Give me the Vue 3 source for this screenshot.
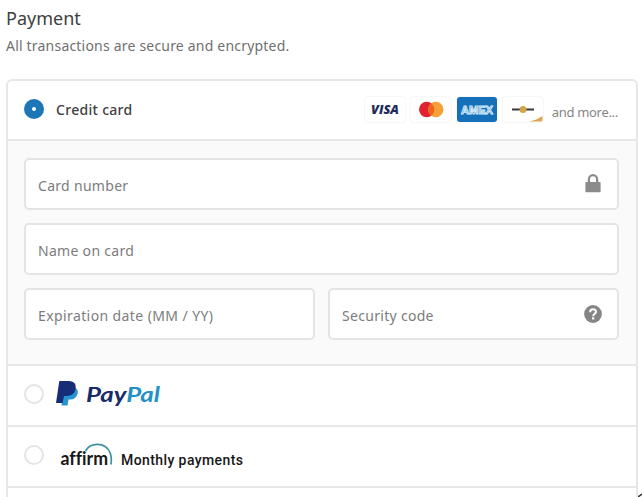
<template>
  <main class="payment">
    <h2 class="title">Payment</h2>
    <p class="subtitle">All transactions are secure and encrypted.</p>

    <section class="methods">
      <div class="method card-method" @click="selected = 'card'">
        <span :class="['radio', { checked: selected == 'card' }]"></span>
        <span class="method-name">Credit card</span>
        <div class="brands">
          <svg class="brand" viewBox="0 0 40 25">
            <text x="6" y="16.5" class="visa" textLength="28" lengthAdjust="spacingAndGlyphs">VISA</text>
          </svg>
          <svg class="brand" viewBox="0 0 40 25">
            <circle cx="15.7" cy="12.5" r="7.7" fill="#e3202f" />
            <circle cx="24.8" cy="12.5" r="7.7" fill="#f5a13a" />
            <path d="M20.2 6.3a7.7 7.7 0 0 1 0 12.4a7.7 7.7 0 0 1 0-12.4z" fill="#f06423" />
          </svg>
          <svg class="brand amex-card" viewBox="0 0 40 25">
            <text x="4" y="16.5" class="amex" textLength="32" lengthAdjust="spacingAndGlyphs">AMEX</text>
          </svg>
          <svg class="brand" viewBox="0 0 40 25">
            <path d="M9 12.5h22" stroke="#3b3835" stroke-width="2" />
            <circle cx="20" cy="12.5" r="3.5" fill="#d3a549" />
            <path d="M26 24.5Q34 23 39.5 19v4q0 1.5-1.5 1.5z" fill="#dda552" />
          </svg>
          <span class="more">and more...</span>
        </div>
      </div>

      <div class="card-form">
        <div v-for="field in fields" :key="field.id" :class="['field', { half: field.half }]">
          <span :class="['label', field.id]">{{ field.label }}</span>
          <svg v-if="field.icon == 'lock'" class="icon lock" viewBox="0 0 18 20">
            <path d="M4.9 10V6.2a4.1 4.1 0 0 1 8.2 0V10" fill="none" stroke="#8b8b8b" stroke-width="2.2" />
            <rect x="1.4" y="9" width="15.2" height="10.2" rx="0.8" fill="#8b8b8b" />
          </svg>
          <svg v-if="field.icon == 'help'" class="icon" viewBox="0 0 18 20">
            <circle cx="9" cy="10" r="8.9" fill="#858585" />
            <path
              d="M6.1 8.2C6.1 4.4 12 4.5 12 7.7C12 9.9 9.2 9.7 9.2 12.2"
              fill="none"
              stroke="#fff"
              stroke-width="2"
            />
            <rect x="8.1" y="13.3" width="2.2" height="2.2" fill="#fff" />
          </svg>
        </div>
      </div>

      <div class="method" @click="selected = 'paypal'">
        <span :class="['radio', { checked: selected == 'paypal' }]"></span>
        <svg class="paypal" width="106" height="30" viewBox="0 0 106 30">
          <path
            d="M8 8H19.5Q22.500 10 21.700 13.500Q20 19.500 14 19.500H12.500L11.500 25.500H5.500L6.500 18Z"
            fill="#2794d2"
          />
          <path
            d="M3.300 1H13.500Q20.700 1.500 19.700 8.500Q18.300 16 11 16H8L6.500 23H0Z"
            fill="#162d78"
          />
          <text x="30" y="21.5" class="wordmark" textLength="74" lengthAdjust="spacingAndGlyphs"><tspan fill="#182b68">Pay</tspan><tspan fill="#2590c8">Pal</tspan></text>
        </svg>
      </div>

      <div class="method" @click="selected = 'affirm'">
        <span :class="['radio', { checked: selected == 'affirm' }]"></span>
        <svg class="affirm" width="190" height="34" viewBox="0 0 190 34">
          <path
            d="M29.500 11C34 2.500 49 1.500 54 12.500Q56 17.500 55 24.500"
            fill="none"
            stroke="#3f929d"
            stroke-width="1.7"
          />
          <text x="4.5" y="24.500" class="affirm-name" textLength="47.5" lengthAdjust="spacingAndGlyphs">affirm</text>
          <text x="65" y="24.500" class="monthly" textLength="122" lengthAdjust="spacing">Monthly payments</text>
        </svg>
      </div>

      <div class="method"></div>
    </section>

    <svg class="resize-mark" width="4" height="4" viewBox="0 0 4 4">
      <path d="M0 4L4 1" stroke="#333" stroke-width="1.5" />
    </svg>
  </main>
</template>

<script setup>
import { ref } from "vue";

const selected = ref("card");

const fields = [
  { id: "number", label: "Card number", icon: "lock" },
  { id: "name", label: "Name on card" },
  { id: "expiry", label: "Expiration date (MM / YY)", half: true },
  { id: "code", label: "Security code", icon: "help", half: true },
];
</script>

<style>
body {
  background: #fff;
  overflow: hidden;
}
</style>

<style scoped>
.payment {
  position: relative;
  box-sizing: border-box;
  height: 497px;
  padding: 6px 4px 0 6px;
  overflow: hidden;
  font-family: "Noto Sans", "Open Sans", sans-serif;
  font-size: 14px;
  color: #404040;
}

.title {
  margin: 0;
  font-size: 18px;
  line-height: 25px;
  font-weight: 400;
}

.subtitle {
  margin: 5px 0 0;
  line-height: 20px;
  letter-spacing: 0.2px;
  color: #707070;
}

.methods {
  box-sizing: border-box;
  margin-top: 23px;
  height: 440px;
  border: 2px solid #e7e7e7;
  border-radius: 6px;
}

.method {
  display: flex;
  align-items: center;
  box-sizing: border-box;
  height: 61px;
  padding: 0 18px 4px 16px;
  border-bottom: 2px solid #e7e7e7;
  cursor: pointer;
}

.card-method {
  height: 60px;
  padding-bottom: 2px;
}

.radio {
  box-sizing: border-box;
  flex: none;
  width: 20px;
  height: 20px;
  border: 2px solid #e4e4e4;
  border-radius: 50%;
}

.radio.checked {
  border: 8px solid #1b77b5;
  background: #fff;
}

.method-name {
  margin-left: 12px;
  font-weight: 500;
  letter-spacing: 0.3px;
}

.brands {
  display: flex;
  align-items: center;
  gap: 6px;
  margin-left: auto;
}

.brand {
  box-sizing: border-box;
  width: 40px;
  height: 25px;
  border-radius: 3px;
  box-shadow: 0 0 0 1px #f7f7f7;
}

.amex-card {
  background: #1570b9;
}

.visa {
  font: italic 800 12px "Open Sans", sans-serif;
  fill: #202b5c;
}

.amex {
  font: 700 11px "Liberation Sans", sans-serif;
  fill: #1570b9;
  stroke: #d4ecfa;
  stroke-width: 1px;
}

.more {
  margin: 6px 0 0 3px;
  font-size: 13px;
  letter-spacing: -0.3px;
  color: #858585;
}

.card-form {
  display: flex;
  flex-wrap: wrap;
  align-content: flex-start;
  gap: 13px;
  box-sizing: border-box;
  height: 225px;
  padding: 17px 17px 0 16px;
  background: #fafafa;
  border-bottom: 2px solid #e7e7e7;
}

.field {
  display: flex;
  align-items: center;
  justify-content: space-between;
  box-sizing: border-box;
  width: 100%;
  height: 52px;
  padding: 0 15px 0 12px;
  background: #fff;
  border: 2px solid #e4e4e4;
  border-radius: 5px;
}

.half {
  flex: 1;
  width: auto;
}

.label {
  margin-top: 2px;
  letter-spacing: 0.3px;
  color: #7c7c7c;
}

.expiry {
  letter-spacing: 0.4px;
}

.icon {
  width: 18px;
  height: 20px;
}

.lock {
  margin-bottom: 2px;
}

.paypal {
  margin: 3px 0 0 12px;
}

.wordmark {
  font: italic 700 20px Lato, sans-serif;
  stroke-width: 0.3px;
}

.affirm {
  margin: 4px 0 0 12px;
}

.affirm-name {
  font: 700 18px Lato, sans-serif;
  font-variant-ligatures: none;
  fill: #171717;
}

.monthly {
  font: 500 14px Roboto, sans-serif;
  fill: #171717;
}

.resize-mark {
  position: absolute;
  right: 0;
  bottom: 0;
}
</style>
